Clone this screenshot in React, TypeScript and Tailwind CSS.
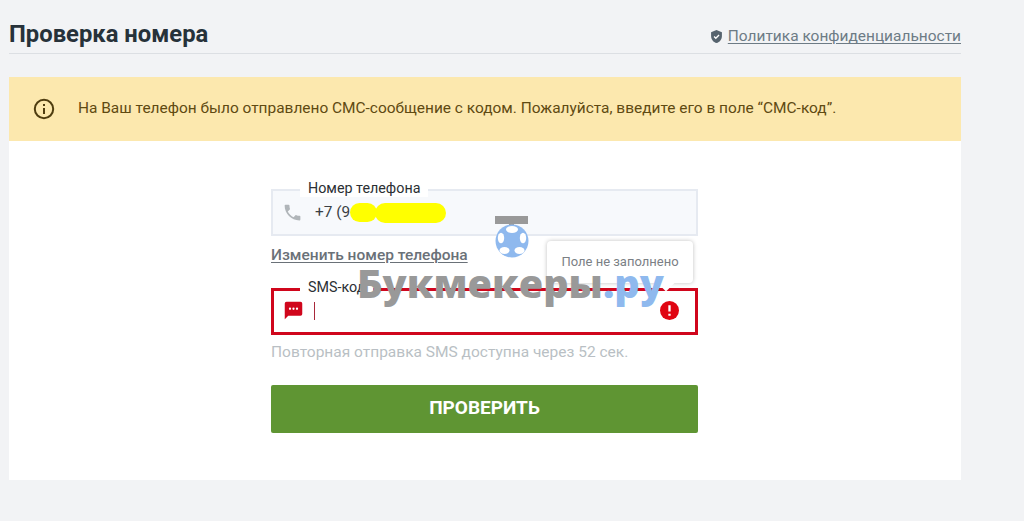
import React from 'react'

const Field = ({ label, error, children }: { label: string; error?: boolean; children: React.ReactNode }) => {
  return (
    <div className={`relative flex h-[47px] items-center border-2 ${error ? 'border-[#d0061c] bg-white shadow-[inset_0_0_0_1px_#d0061c]' : 'border-[#e6eaf1] bg-[#f7f9fc]'}`}>
      {/*Legenda*/}
      <span className="absolute left-[27px] top-[-12px] bg-white px-[8px] text-[14.3px] leading-[18px] text-[#2b2f33]">{label}</span>
      {children}
    </div>
  )
}

const App = () => {
  return (
    <div className="relative h-[521px] w-[1024px] overflow-hidden bg-[#f2f3f5] font-['Roboto',sans-serif]">
      <div className="ml-[9px] w-[952px]">
        {/*Titulo*/}
        <div className="flex h-[54px] items-end justify-between border-b border-[#dcdfe3] pb-[4px]">
          <h1 className="text-[23.8px] font-bold leading-[30px] text-[#27323a]">Проверка номера</h1>
          <div className="flex items-center gap-[5px] pb-[3px]">
            <svg width="13" height="15" viewBox="0 0 24 26" className="mt-[1px]">
              <path d="M12 1 2 5v7c0 6.500 4.200 11.600 10 13 5.800-1.400 10-6.500 10-13V5z" fill="#56636e" />
              <path d="m7.500 13 3.200 3.200 6-6" fill="none" stroke="#fff" strokeWidth="2.400" />
            </svg>
            <a className="text-[15.47px] leading-[20px] text-[#6d7b85] underline underline-offset-2">Политика конфиденциальности</a>
          </div>
        </div>

        {/*Aviso*/}
        <div className="mt-[23px] flex h-[64px] items-center bg-[#fce8ae] pl-[24px] text-[15.45px] text-[#5f4a12]">
          <svg width="22" height="22" viewBox="0 0 22 22" fill="none">
            <circle cx="11" cy="11" r="9.200" stroke="#4f3d10" strokeWidth="2" />
            <path d="M11 10v6M11 6v2" stroke="#4f3d10" strokeWidth="2" />
          </svg>
          <p className="ml-[23px]">На Ваш телефон было отправлено СМС-сообщение с кодом. Пожалуйста, введите его в поле “СМС-код”.</p>
        </div>

        {/*Formulario*/}
        <div className="flex h-[339px] bg-white pl-[262px] pt-[48px]">
          <div className="w-[427px]">
            <Field label="Номер телефона">
              <svg width="21" height="21" viewBox="0 0 24 24" fill="#b0b5b9" className="ml-[9px]">
                <path d="M6.600 10.800c1.400 2.800 3.800 5.100 6.600 6.600l2.200-2.200c.3-.3.7-.4 1-.2 1.100.4 2.300.6 3.600.6.600 0 1 .4 1 1V20c0 .6-.4 1-1 1C10.600 21 3 13.400 3 4c0-.6.4-1 1-1h3.500c.6 0 1 .4 1 1 0 1.300.2 2.500.6 3.600.1.300 0 .7-.2 1z" />
              </svg>
              <span className="ml-[12px] mt-[1px] text-[15.4px] text-[#3a3f44]">+7 (9</span>
              {/*Rabisco amarelo*/}
              <span className="absolute left-[77px] top-[12px] h-[19px] w-[27px] rounded-full bg-[#ffff00]" />
              <span className="absolute left-[102px] top-[12px] h-[20px] w-[71px] rounded-full bg-[#ffff00]" />
            </Field>

            <a className="mt-[9px] block text-[15.5px] font-medium leading-[20px] text-[#6a7178] underline underline-offset-2">Изменить номер телефона</a>

            <div className="mt-[23px]">
              <Field label="SMS-код" error>
                <svg width="21" height="21" viewBox="0 0 24 24" className="mb-[3px] ml-[10px]">
                  <path d="M4 2h16a2 2 0 0 1 2 2v12a2 2 0 0 1-2 2H6l-4 4V4a2 2 0 0 1 2-2z" fill="#d0061c" />
                  <circle cx="8" cy="10" r="1.300" fill="#fff" />
                  <circle cx="12" cy="10" r="1.300" fill="#fff" />
                  <circle cx="16" cy="10" r="1.300" fill="#fff" />
                </svg>
                <span className="mb-[2px] ml-[10px] h-[18px] w-[1px] bg-[#a8283a]" />
                <svg width="19" height="19" viewBox="0 0 18 18" className="mb-[2px] ml-auto mr-[17px]">
                  <circle cx="9" cy="9" r="9" fill="#e00512" />
                  <path d="M9 4v6M9 12v2" stroke="#fff" strokeWidth="2.200" />
                </svg>

                {/*Tooltip*/}
                <div className="absolute right-[3px] top-[-49px] flex h-[42px] w-[146px] items-center justify-center rounded-[4px] bg-white text-[13px] text-[#7b8085] shadow-[0_0_4px_rgba(0,0,0,0.25)]">
                  Поле не заполнено
                  <span className="absolute bottom-[-6px] left-[113px] size-[12px] rotate-45 bg-white" />
                </div>
              </Field>
            </div>

            <p className="mt-[7px] text-[15.5px] leading-[20px] text-[#b9bfc4]">Повторная отправка SMS доступна через 52 сек.</p>

            <button className="mt-[23px] h-[48px] w-full rounded-[2px] bg-[#5f9533] pb-[2px] text-[19px] font-bold text-white">ПРОВЕРИТЬ</button>
          </div>
        </div>
      </div>

      {/*Marca d'agua*/}
      <div className="pointer-events-none absolute left-[357px] top-[216px] w-[312px]">
        <svg width="34" height="58" viewBox="0 0 34 58" className="ml-[138px]">
          <rect x="0" y="0" width="33" height="8" fill="#999" />
          <rect x="14" y="8" width="5" height="3" fill="#999" />
          <circle cx="17" cy="25" r="16.500" fill="#8fb9ee" />
          <ellipse cx="17" cy="13.500" rx="6" ry="3.400" fill="#fff" />
          <ellipse cx="6" cy="22" rx="3.200" ry="5.200" fill="#fff" />
          <ellipse cx="28" cy="22" rx="3.200" ry="5.200" fill="#fff" />
          <ellipse cx="9.500" cy="34.500" rx="5" ry="3.400" fill="#fff" />
          <ellipse cx="24.500" cy="34.500" rx="5" ry="3.400" fill="#fff" />
        </svg>
        <div className="mt-[-13px] whitespace-nowrap font-['Open_Sans',sans-serif] text-[39.6px] font-extrabold leading-[44px] text-[#999999]">
          Букмекеры<span className="text-[#8fb9ee]">.ру</span>
        </div>
      </div>
    </div>
  )
}

export default App
